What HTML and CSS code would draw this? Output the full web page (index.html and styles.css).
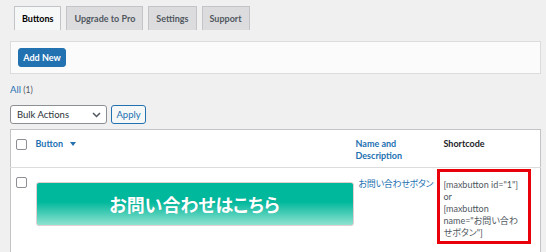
FILE: index.html
```html
<!DOCTYPE html>
<html lang="ja">
<head>
    <meta charset="UTF-8">
    <meta name="viewport" content="width=device-width, initial-scale=1.0">
    <title>MaxButtons</title>
    <link rel="stylesheet" href="styles.css">
</head>
<body>
    <div class="wrap">
        <nav class="tabs">
            <a class="tab active">Buttons</a>
            <a class="tab">Upgrade to Pro</a>
            <a class="tab">Settings</a>
            <a class="tab">Support</a>
        </nav>

        <div class="panel">
            <button class="btn-primary">Add New</button>
        </div>

        <div class="views">All <span class="count">(1)</span></div>

        <div class="bulk">
            <div class="select">
                <span>Bulk Actions</span>
                <svg width="9" height="6" viewBox="0 0 9 6"><path d="M1 1l3.5 3.5L8 1" fill="none" stroke="#50575e" stroke-width="1.5"/></svg>
            </div>
            <button class="btn-secondary">Apply</button>
        </div>

        <table class="list">
            <colgroup>
                <col class="c-cb">
                <col class="c-button">
                <col class="c-name">
                <col class="c-code">
            </colgroup>
            <thead>
                <tr>
                    <th class="cb"><span class="check"></span></th>
                    <th class="sortable">Button <span class="arrow"></span></th>
                    <th class="sortable">Name and Description</th>
                    <th>Shortcode</th>
                </tr>
            </thead>
            <tbody>
                <tr>
                    <td class="cb"><span class="check"></span></td>
                    <td class="preview"><div class="maxbutton">お問い合わせはこちら</div></td>
                    <td class="name">お問い合わせボタン</td>
                    <td class="code">
                        <div class="highlight"><span class="nowrap">[maxbutton id="1"]</span><br>or<br>[maxbutton name="お問い合わせボタン"]</div>
                    </td>
                </tr>
            </tbody>
        </table>
    </div>
</body>
</html>
```

FILE: styles.css
```css
body {
    margin: 0;
    background-color: #f0f0f1;
    font-family: Lato, "Noto Sans CJK JP", sans-serif;
    font-size: 9.5px;
    color: #3c434a;
}
.wrap {
    margin: 0 5px 0 10px;
    padding-top: 6px;
}
.tabs {
    display: flex;
    gap: 5px;
    padding-left: 4px;
}
.tab {
    display: block;
    height: 23px;
    line-height: 23px;
    padding: 0 7px;
    border: 1px solid #c3c4c7;
    border-bottom: none;
    background-color: #dcdcde;
    color: #50575e;
    font-weight: 700;
    font-size: 9px;
}
.tab.active {
    background-color: #f6f7f7;
    color: #000;
}
.panel {
    margin-top: 11px;
    height: 33px;
    padding: 6px 7px 0;
    box-sizing: border-box;
    background-color: #fbfbfb;
    border: 1px solid #dcdcde;
}
.btn-primary {
    display: block;
    height: 19px;
    width: 48px;
    padding: 0;
    background-color: #2271b1;
    border: 1px solid #2271b1;
    border-radius: 3px;
    color: #fff;
    font-family: inherit;
    font-size: 9px;
    font-weight: 700;
}
.views {
    margin-top: 9px;
    line-height: 14px;
    color: #2271b1;
}
.views .count {
    color: #50575e;
    font-size: 8.5px;
}
.bulk {
    display: flex;
    gap: 4px;
    margin-top: 8px;
}
.select {
    width: 97px;
    height: 19px;
    box-sizing: border-box;
    display: flex;
    align-items: center;
    justify-content: space-between;
    padding: 0 5px 0 6px;
    background-color: #fff;
    border: 1px solid #8c8f94;
    border-radius: 3px;
    color: #2c3338;
}
.btn-secondary {
    height: 19px;
    width: 35px;
    padding: 0;
    background-color: #f6f7f7;
    border: 1px solid #2271b1;
    border-radius: 3px;
    color: #2271b1;
    font-family: inherit;
    font-size: 9.5px;
}
.list {
    margin-top: 5px;
    width: 100%;
    table-layout: fixed;
    border-collapse: collapse;
    background-color: #fff;
    border: 1px solid #c3c4c7;
}
.c-cb { width: 25px; }
.c-button { width: 320px; }
.c-name { width: 80px; }
.list th {
    height: 38px;
    box-sizing: border-box;
    padding: 8px 0 0 0;
    text-align: left;
    vertical-align: top;
    font-weight: 700;
    font-size: 9px;
    line-height: 12px;
    color: #1d2327;
    border-bottom: 1px solid #dcdcde;
}
.list th.sortable { color: #2271b1; }
.list th:nth-child(4) { padding-left: 8px; }
.list th.cb, .list td.cb { padding-left: 5px; }
.check {
    display: block;
    width: 11px;
    height: 11px;
    box-sizing: border-box;
    border: 1px solid #8c8f94;
    border-radius: 2px;
    background-color: #fff;
}
th .check { margin-top: 1px; }
.arrow {
    display: inline-block;
    margin-left: 5px;
    border-left: 3px solid transparent;
    border-right: 3px solid transparent;
    border-top: 4px solid #2271b1;
    vertical-align: 1px;
}
.list td {
    vertical-align: top;
    padding: 0;
    height: 100px;
}
.list td.cb { padding-top: 9px; }
.preview { padding-top: 14px !important; }
.maxbutton {
    width: 318px;
    height: 44px;
    box-sizing: border-box;
    border: 1px solid #e2cfd2;
    border-radius: 3px;
    background: linear-gradient(#00b89c 0%, #00b89c 45%, #8fe2d0 100%);
    color: #fff;
    font-family: "Noto Sans CJK JP", sans-serif;
    font-feature-settings: "palt";
    font-weight: 700;
    font-size: 18px;
    line-height: 42px;
    text-align: center;
    text-shadow: 0 0 1px rgba(0,0,0,0.15);
}
.name {
    padding: 9px 0 0 3px !important;
    color: #2271b1;
    font-family: "Noto Sans CJK JP", sans-serif;
    font-feature-settings: "palt";
    font-size: 9px;
    letter-spacing: -0.3px;
    white-space: nowrap;
}
.code { padding: 1px 0 0 1px !important; }
.highlight {
    width: 94px;
    height: 75px;
    box-sizing: border-box;
    border: 3px solid #e8000b;
    padding: 7px 9px 0 4px;
    color: #50575e;
    font-size: 9px;
    line-height: 12px;
    font-feature-settings: "palt";
}
.nowrap { white-space: nowrap; }
```
